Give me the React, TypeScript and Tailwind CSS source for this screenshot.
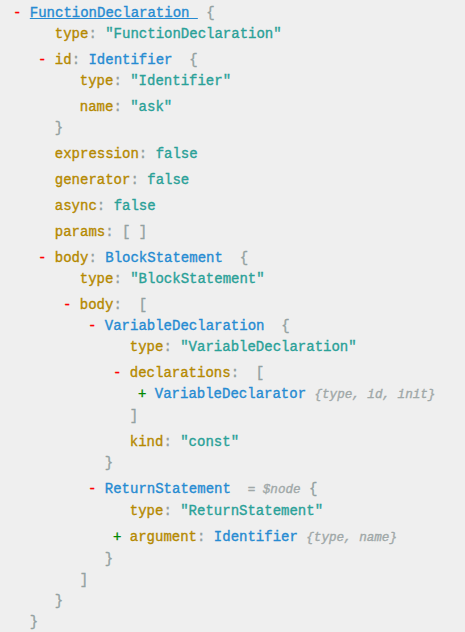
import React from "react";

type C = { children?: React.ReactNode };

const P = ({ children }: C) => <span className="text-[#93a1a1]">{children}</span>;
const K = ({ children }: C) => <span className="text-[#b58900]">{children}</span>;
const S = ({ children }: C) => <span className="text-[#2aa198]">{children}</span>;
const T = ({ children }: C) => <span className="text-[#268bd2]">{children}</span>;
const Small = ({ children }: C) => (
  <span className="text-[12.6px] italic text-[#a0a8a8]">{children}</span>
);

function Leaf({ k, children }: { k: string; children: React.ReactNode }) {
  return (
    <li className="pl-[2ch] whitespace-pre">
      <K>{k}</K>
      <P>: </P>
      {children}
    </li>
  );
}

function Node({
  header,
  close,
  children,
}: {
  header: React.ReactNode;
  close: string;
  children: React.ReactNode;
}) {
  return (
    <li>
      <div className="whitespace-pre">
        <span className="text-[#f00]">- </span>
        {header}
      </div>
      <ul className="pl-[25px] flex flex-col gap-[5px]">{children}</ul>
      <div className="pl-[2ch]">
        <P>{close}</P>
      </div>
    </li>
  );
}

function Collapsed({ children }: C) {
  return (
    <li className="whitespace-pre">
      <span className="text-[#080]">+ </span>
      {children}
    </li>
  );
}

export default function App() {
  return (
    <div
      className="min-h-screen bg-[#efefef] text-[14px] leading-[21px] overflow-hidden [-webkit-text-stroke:0.35px]"
      style={{ fontFamily: '"Liberation Mono", "DejaVu Sans Mono", monospace' }}
    >
      <ul className="pl-[13px] pt-[3px]">
        <Node
          header={
            <>
              <span className="text-[#268bd2] underline">FunctionDeclaration </span>
              <P> {"{"}</P>
            </>
          }
          close="}"
        >
          <Leaf k="type">
            <S>"FunctionDeclaration"</S>
          </Leaf>
          <Node
            header={
              <>
                <K>id</K>
                <P>: </P>
                <T>Identifier</T>
                <P>{"  {"}</P>
              </>
            }
            close="}"
          >
            <Leaf k="type">
              <S>"Identifier"</S>
            </Leaf>
            <Leaf k="name">
              <S>"ask"</S>
            </Leaf>
          </Node>
          <Leaf k="expression">
            <S>false</S>
          </Leaf>
          <Leaf k="generator">
            <S>false</S>
          </Leaf>
          <Leaf k="async">
            <S>false</S>
          </Leaf>
          <Leaf k="params">
            <P>[ ]</P>
          </Leaf>
          <Node
            header={
              <>
                <K>body</K>
                <P>: </P>
                <T>BlockStatement</T>
                <P>{"  {"}</P>
              </>
            }
            close="}"
          >
            <Leaf k="type">
              <S>"BlockStatement"</S>
            </Leaf>
            <Node
              header={
                <>
                  <K>body</K>
                  <P>{":  ["}</P>
                </>
              }
              close="]"
            >
              <Node
                header={
                  <>
                    <T>VariableDeclaration</T>
                    <P>{"  {"}</P>
                  </>
                }
                close="}"
              >
                <Leaf k="type">
                  <S>"VariableDeclaration"</S>
                </Leaf>
                <Node
                  header={
                    <>
                      <K>declarations</K>
                      <P>{":  ["}</P>
                    </>
                  }
                  close="]"
                >
                  <Collapsed>
                    <T>VariableDeclarator</T> <Small>{"{type, id, init}"}</Small>
                  </Collapsed>
                </Node>
                <Leaf k="kind">
                  <S>"const"</S>
                </Leaf>
              </Node>
              <Node
                header={
                  <>
                    <T>ReturnStatement</T>
                    {"  "}
                    <Small>= $node</Small>
                    <P>{" {"}</P>
                  </>
                }
                close="}"
              >
                <Leaf k="type">
                  <S>"ReturnStatement"</S>
                </Leaf>
                <Collapsed>
                  <K>argument</K>
                  <P>: </P>
                  <T>Identifier</T> <Small>{"{type, name}"}</Small>
                </Collapsed>
              </Node>
            </Node>
          </Node>
        </Node>
      </ul>
      <div className="ml-[25px] mt-[1px] h-[12px] bg-[#f9f1c4]" />
    </div>
  );
}
